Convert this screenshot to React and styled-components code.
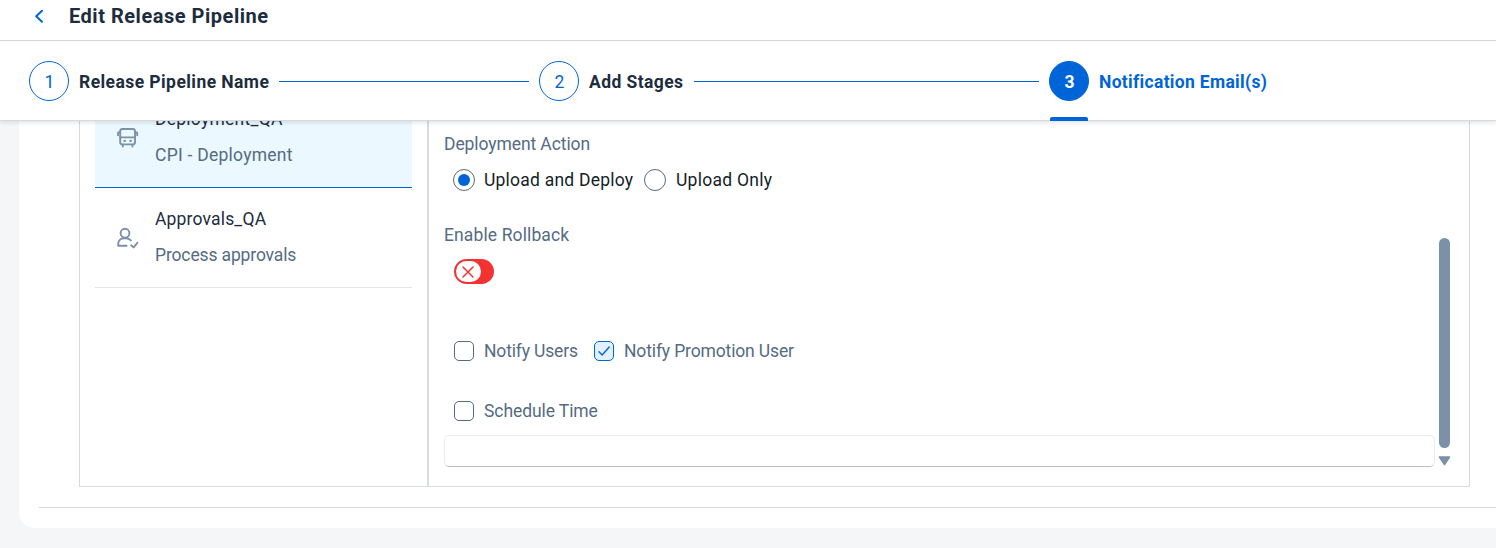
import React from "react";
import styled, { createGlobalStyle } from "styled-components";

const GlobalStyle = createGlobalStyle`
  *, *::before, *::after { box-sizing: border-box; }
  html, body { margin: 0; height: 100%; overflow: hidden; }
  body {
    background: #f5f6f7;
    font-family: Roboto, "Liberation Sans", sans-serif;
    font-size: 17.5px;
    color: #1d2d3e;
  }
`;

const Page = styled.div`
  height: 548px;
  display: flex;
  flex-direction: column;
  overflow: hidden;
`;

const TitleBar = styled.header`
  flex: none;
  height: 41px;
  padding: 0 0 9px 33px;
  display: flex;
  align-items: center;
  background: #fff;
  border-bottom: 1px solid #d9d9d9;
`;

const BackIcon = styled.svg`
  width: 12px;
  height: 14px;
  margin-right: 24px;
`;

const Title = styled.h1`
  margin: 0;
  font-size: 20px;
  font-weight: 700;
  line-height: 24px;
  white-space: nowrap;
  letter-spacing: ${(p) => p.$spacing}px;
`;

const Wizard = styled.nav`
  position: relative;
  z-index: 1;
  flex: none;
  height: 80px;
  padding-left: 29px;
  display: flex;
  background: #fff;
  border-bottom: 1px solid #d9d9d9;
  box-shadow: 0 2px 4px rgba(34, 53, 72, 0.12);
`;

const Step = styled.div`
  position: relative;
  width: ${(p) => p.$width}px;
  display: flex;
  align-items: center;
  color: ${(p) => (p.$active ? "#0064d9" : "#1d2d3e")};
  &::after {
    content: "";
    display: ${(p) => (p.$active ? "block" : "none")};
    position: absolute;
    left: 1px;
    bottom: -1px;
    width: 38px;
    height: 4px;
    border-radius: 2px 2px 0 0;
    background: #0064d9;
  }
`;

const StepNumber = styled.span`
  flex: none;
  width: 40px;
  height: 40px;
  display: grid;
  place-items: center;
  border: 1px solid #0064d9;
  border-radius: 50%;
  background: ${(p) => (p.$active ? "#0064d9" : "#fff")};
  color: ${(p) => (p.$active ? "#fff" : "#0064d9")};
  font-weight: ${(p) => (p.$active ? 700 : 400)};
  padding: 2px 0 0 1px;
`;

const StepLabel = styled.span`
  margin-left: 10px;
  padding-top: 2px;
  font-weight: 700;
  white-space: nowrap;
  letter-spacing: ${(p) => p.$spacing}px;
`;

const Connector = styled.span`
  flex: 1;
  height: 1px;
  margin: 1px 10px 0;
  background: #0064d9;
`;

const Content = styled.main`
  flex: 1;
  min-height: 0;
  padding: 0 0 20px 19px;
`;

const Sheet = styled.section`
  height: 100%;
  padding: 0 0 20px 20px;
  background: #fff;
  border-bottom-left-radius: 15px;
`;

const SheetBody = styled.div`
  height: 387px;
  padding: 0 26px 20px 40px;
  border-bottom: 1px solid #d9d9d9;
`;

const Panel = styled.div`
  height: 366px;
  display: flex;
  border: 1px solid #d9d9d9;
  border-top: 0;
  border-bottom-color: #d9dde1;
`;

const TaskList = styled.ul`
  flex: none;
  width: 349px;
  height: 100%;
  margin: 0;
  padding: 0 15px;
  overflow: hidden;
  list-style: none;
  display: flex;
  flex-direction: column;
  justify-content: flex-start;
  border-right: 2px solid #d9dde1;
`;

const Task = styled.li`
  flex: none;
  height: 100px;
  padding: 13px 0 0 21px;
  display: flex;
  background: ${(p) => (p.$selected ? "#ebf8ff" : "#fff")};
  border-bottom: 1px solid ${(p) => (p.$selected ? "#0064d9" : "#e5e5e5")};
  &:first-child { margin-top: -33px; }
`;

const TaskIcon = styled.svg`
  flex: none;
  width: 24px;
  height: 24px;
  margin: 25px 15px 0 0;
  fill: none;
  stroke: #7c91a8;
  stroke-width: 1.9;
  stroke-linecap: round;
  stroke-linejoin: round;
`;

const TaskText = styled.div`
  display: flex;
  flex-direction: column;
`;

const TaskLine = styled.span`
  line-height: 36px;
  white-space: nowrap;
  color: ${(p) => (p.$muted ? "#556b82" : "#1d2d3e")};
  letter-spacing: ${(p) => p.$spacing}px;
`;

const Details = styled.div`
  flex: 1;
  min-width: 0;
  padding-left: 15px;
  display: flex;
`;

const Form = styled.form`
  width: 991px;
  flex: none;
`;

const Label = styled.div`
  height: 24px;
  line-height: 24px;
  margin-top: ${(p) => p.$top}px;
  color: #556b82;
  white-space: nowrap;
  letter-spacing: ${(p) => p.$spacing}px;
`;

const Options = styled.div`
  height: 24px;
  margin-top: ${(p) => p.$top}px;
  padding-left: ${(p) => p.$inset}px;
  display: flex;
  align-items: center;
`;

const Option = styled.label`
  width: ${(p) => p.$width}px;
  display: flex;
  align-items: center;
  gap: ${(p) => p.$gap || 10}px;
  line-height: 24px;
  white-space: nowrap;
  color: ${(p) => (p.$strong ? "#131e29" : "#556b82")};
  letter-spacing: ${(p) => p.$spacing}px;
`;

const Radio = styled.span`
  flex: none;
  width: 22px;
  height: 22px;
  display: grid;
  place-items: center;
  border: 1px solid #556b82;
  border-radius: 50%;
  &::after {
    content: "";
    width: 12px;
    height: 12px;
    border-radius: 50%;
    background: ${(p) => (p.$checked ? "#0064d9" : "transparent")};
  }
`;

const Checkbox = styled.span`
  flex: none;
  width: 20px;
  height: 20px;
  display: grid;
  place-items: center;
  border: 1px solid ${(p) => (p.$checked ? "#0064d9" : "#556b82")};
  border-radius: 5px;
  background: ${(p) => (p.$checked ? "#e3f0ff" : "#fff")};
`;

const Switch = styled.div`
  width: 40px;
  height: 25px;
  margin: 12px 0 0 10px;
  padding: 2px;
  border-radius: 12.5px;
  background: #f53232;
`;

const Knob = styled.span`
  width: 25px;
  height: 21px;
  padding-right: 1px;
  display: grid;
  place-items: center;
  border-radius: 10.5px;
  background: #fff;
`;

const TimeInput = styled.div`
  height: 32px;
  margin-top: 12px;
  border: 1px solid #ebebeb;
  border-bottom-color: #b4bfcb;
  border-radius: 5px;
`;

const ScrollTrack = styled.div`
  width: 13px;
  margin-left: 3px;
  padding-top: 117px;
  display: flex;
  flex-direction: column;
  align-items: center;
`;

const ScrollThumb = styled.span`
  width: 11px;
  height: 210px;
  border-radius: 6px;
  background: #7b91a8;
`;

const ScrollArrow = styled.svg`
  width: 13px;
  height: 10px;
  margin-top: 8px;
`;

function Check() {
  return (
    <svg width="14" height="14" viewBox="0 0 14 14" fill="none" stroke="#0064d9" strokeWidth="1.4" strokeLinecap="round" strokeLinejoin="round">
      <path d="M2 7.8 5.2 11 12.2 3" />
    </svg>
  );
}

export default function App() {
  return (
    <>
      <GlobalStyle />
      <Page>
        <TitleBar>
          <BackIcon viewBox="0 0 12 14" fill="none" stroke="#0064d9" strokeWidth="2" strokeLinecap="round" strokeLinejoin="round">
            <path d="M9 1.8 3.2 7.3 9 12.8" />
          </BackIcon>
          <Title $spacing={0.52}>Edit Release Pipeline</Title>
        </TitleBar>
        <Wizard>
          <Step $width={510}>
            <StepNumber>1</StepNumber>
            <StepLabel $spacing={0.43}>Release Pipeline Name</StepLabel>
            <Connector />
          </Step>
          <Step $width={510}>
            <StepNumber>2</StepNumber>
            <StepLabel $spacing={0.42}>Add Stages</StepLabel>
            <Connector />
          </Step>
          <Step $active>
            <StepNumber $active>3</StepNumber>
            <StepLabel $spacing={0.31}>Notification Email(s)</StepLabel>
          </Step>
        </Wizard>
        <Content>
          <Sheet>
            <SheetBody>
              <Panel>
                <TaskList>
                  <Task $selected>
                    <TaskIcon viewBox="0 0 24 24">
                      <rect x="4.2" y="3" width="14.8" height="15.4" rx="2.2" />
                      <path d="M4.2 11.4H19M4 6.2H3Q2 6.2 2 7.2V9.2M19.2 6.2h1q1 0 1 1v2M6.8 18.6v2M16.4 18.6v2" />
                      <path d="M8.6 14.9h.1M14.6 14.9h.1" strokeWidth="2.4" />
                    </TaskIcon>
                    <TaskText>
                      <TaskLine $spacing={0.25}>Deployment_QA</TaskLine>
                      <TaskLine $muted $spacing={0.25}>CPI - Deployment</TaskLine>
                    </TaskText>
                  </Task>
                  <Task>
                    <TaskIcon viewBox="0 0 24 24">
                      <circle cx="9" cy="7.2" r="4.4" />
                      <path d="M10.6 19.8H2.2v-2.2a5.8 5.8 0 0 1 5.8-5.4h2.2q2.8 0 4.6 2.2M15.2 19.2l2.4 2.2 3.8-4.6" />
                    </TaskIcon>
                    <TaskText>
                      <TaskLine $spacing={0.17}>Approvals_QA</TaskLine>
                      <TaskLine $muted $spacing={-0.14}>Process approvals</TaskLine>
                    </TaskText>
                  </Task>
                </TaskList>
                <Details>
                  <Form>
                    <Label $top={11} $spacing={-0.09}>Deployment Action</Label>
                    <Options $top={12} $inset={9}>
                      <Option $strong $width={191} $gap={9} $spacing={0.22}>
                        <Radio $checked />
                        Upload and Deploy
                      </Option>
                      <Option $strong $spacing={0.27}>
                        <Radio />
                        Upload Only
                      </Option>
                    </Options>
                    <Label $top={31} $spacing={0.12}>Enable Rollback</Label>
                    <Switch>
                      <Knob>
                        <svg width="12" height="12" viewBox="0 0 12 12" stroke="#f53232" strokeWidth="1.5" strokeLinecap="round">
                          <path d="M1 1 11 11M11 1 1 11" />
                        </svg>
                      </Knob>
                    </Switch>
                    <Options $top={55} $inset={10}>
                      <Option $width={140} $spacing={-0.16}>
                        <Checkbox />
                        Notify Users
                      </Option>
                      <Option $spacing={-0.14}>
                        <Checkbox $checked>
                          <Check />
                        </Checkbox>
                        Notify Promotion User
                      </Option>
                    </Options>
                    <Options $top={36} $inset={10}>
                      <Option $spacing={-0.08}>
                        <Checkbox />
                        Schedule Time
                      </Option>
                    </Options>
                    <TimeInput />
                  </Form>
                  <ScrollTrack>
                    <ScrollThumb />
                    <ScrollArrow viewBox="0 0 13 10">
                      <path d="M1.5 1h10L6.5 8.6Z" fill="#7b91a8" stroke="#7b91a8" strokeWidth="1.6" strokeLinejoin="round" />
                    </ScrollArrow>
                  </ScrollTrack>
                </Details>
              </Panel>
            </SheetBody>
          </Sheet>
        </Content>
      </Page>
    </>
  );
}
